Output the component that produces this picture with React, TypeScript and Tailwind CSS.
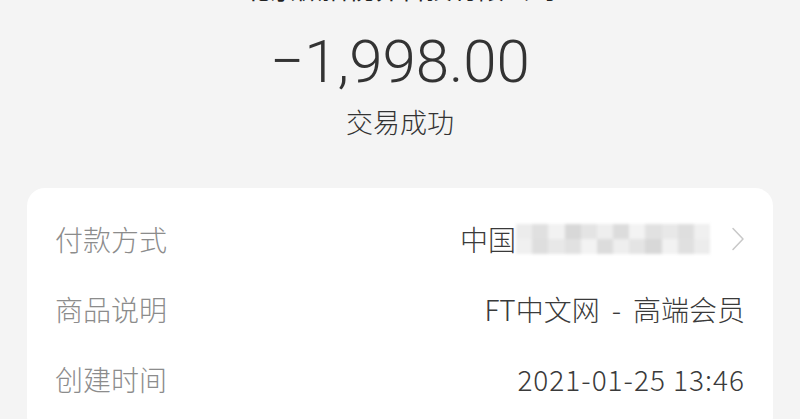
const cjk = { fontFamily: '"Noto Sans CJK SC", "Noto Sans", sans-serif' };

function Chevron() {
  return (
    <svg width="14" height="24" viewBox="0 0 14 24" fill="none" className="shrink-0">
      <path d="M2 1.5 L12 12 L2 22.5" stroke="#c8c8c8" strokeWidth="1.5" strokeLinecap="round" strokeLinejoin="round" />
    </svg>
  );
}

function Mosaic() {
  const cells = ['#ececec', '#e0e0e0', '#f2f2f2', '#d8d8d8', '#e4e4e4', '#eeeeee', '#dcdcdc', '#f3f3f3', '#e1e1e1', '#e8e8e8', '#dedede', '#f0f0f0'];
  return (
    <div className="flex h-[30px] w-[194px] flex-col overflow-hidden blur-[1.5px]">
      <div className="flex flex-1">
        {cells.map((c, i) => (
          <div key={i} className="h-full flex-1" style={{ backgroundColor: c }} />
        ))}
      </div>
      <div className="flex flex-1">
        {cells.slice().reverse().map((c, i) => (
          <div key={i} className="h-full flex-1" style={{ backgroundColor: c }} />
        ))}
      </div>
    </div>
  );
}

function Row({ label, children }: { label: string; children: React.ReactNode }) {
  return (
    <div className="flex h-[70px] items-center justify-between">
      <span className="text-[28px] font-light text-[#8c8c8c]">{label}</span>
      <div className="flex items-center text-[28px] font-light text-[#3a3a3a]">{children}</div>
    </div>
  );
}

export default function App() {
  return (
    <div className="h-[419px] w-[800px] overflow-hidden bg-[#f4f4f4]" style={cjk}>
      <div className="h-[6px] overflow-hidden">
        <div className="-mt-[30px] text-center text-[26px] leading-[36px] text-[#222]">北京微播视界科技有限公司</div>
      </div>
      <div className="mt-[26px] flex flex-col items-center">
        <div className="text-[60px] font-light leading-[60px] text-[#333]" style={{ fontFamily: 'Roboto, "Noto Sans", sans-serif' }}>
          −1,998.00
        </div>
        <div className="mt-[14px] text-[27px] font-light leading-[32px] text-[#333]">交易成功</div>
      </div>
      <div className="mx-[27px] mt-[50px] rounded-[18px] bg-white px-[28px] pt-[16px] pb-[20px]">
        <Row label="付款方式">
          <span>中国</span>
          <Mosaic />
          <span className="ml-[21px]"><Chevron /></span>
        </Row>
        <Row label="商品说明">
          <span>FT中文网</span>
          <span className="mx-[12px]">-</span>
          <span>高端会员</span>
        </Row>
        <Row label="创建时间">
          <span className="tracking-[1px]">2021-01-25 13:46</span>
        </Row>
      </div>
    </div>
  );
}
